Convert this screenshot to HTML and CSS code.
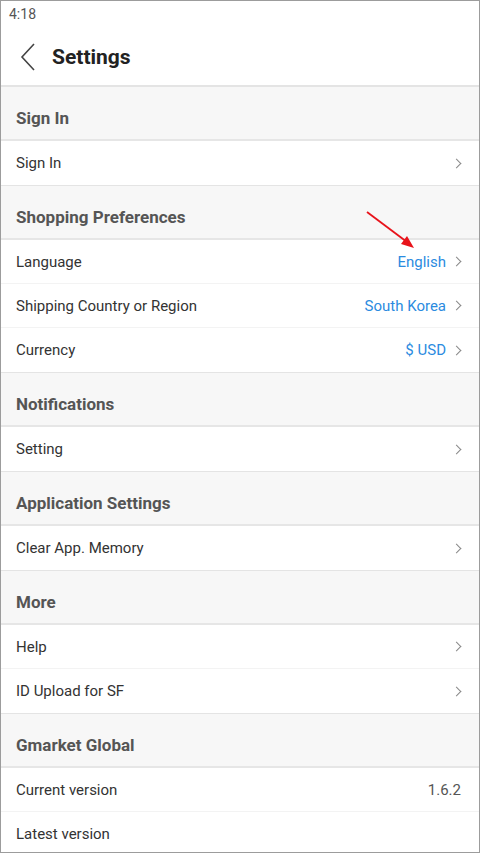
FILE: index.html
```html
<!DOCTYPE html>
<html lang="en">
<head>
    <meta charset="UTF-8">
    <meta name="viewport" content="width=device-width, initial-scale=1.0">
    <title>Settings</title>
    <link rel="stylesheet" href="styles.css">
</head>
<body>
    <div class="phone">
        <div class="status-bar">4:18</div>

        <div class="app-bar">
            <svg class="back" width="18" height="28" viewBox="0 0 18 28">
                <path d="M15 1 L3 14 L15 27" fill="none" stroke="#444" stroke-width="1.6"/>
            </svg>
            <h1 class="title">Settings</h1>
        </div>

        <div class="content">
            <div class="group">
                <div class="group-title">Sign In</div>
                <div class="row">
                    <span class="label">Sign In</span>
                    <span class="chev"></span>
                </div>
            </div>

            <div class="group">
                <div class="group-title">Shopping Preferences</div>
                <div class="row">
                    <span class="label">Language</span>
                    <span class="value">English</span>
                    <span class="chev"></span>
                </div>
                <div class="row">
                    <span class="label">Shipping Country or Region</span>
                    <span class="value">South Korea</span>
                    <span class="chev"></span>
                </div>
                <div class="row">
                    <span class="label">Currency</span>
                    <span class="value">$ USD</span>
                    <span class="chev"></span>
                </div>
            </div>

            <div class="group">
                <div class="group-title">Notifications</div>
                <div class="row">
                    <span class="label">Setting</span>
                    <span class="chev"></span>
                </div>
            </div>

            <div class="group">
                <div class="group-title">Application Settings</div>
                <div class="row">
                    <span class="label">Clear App. Memory</span>
                    <span class="chev"></span>
                </div>
            </div>

            <div class="group">
                <div class="group-title">More</div>
                <div class="row">
                    <span class="label">Help</span>
                    <span class="chev"></span>
                </div>
                <div class="row">
                    <span class="label">ID Upload for SF</span>
                    <span class="chev"></span>
                </div>
            </div>

            <div class="group">
                <div class="group-title">Gmarket Global</div>
                <div class="row">
                    <span class="label">Current version</span>
                    <span class="version">1.6.2</span>
                </div>
                <div class="row">
                    <span class="label">Latest version</span>
                </div>
            </div>

            <!-- annotation arrow pointing at the language value -->
            <svg class="pointer" width="60" height="46" viewBox="0 0 60 46">
                <line x1="2" y1="2" x2="42" y2="32" stroke="#e8131b" stroke-width="1.8"/>
                <polygon points="49,38 36,34 42,26" fill="#e8131b"/>
            </svg>
        </div>
    </div>
</body>
</html>
```

FILE: styles.css
```css
* {
    box-sizing: border-box;
}

body {
    margin: 0;
    background: #fff;
    font-family: Roboto, "Noto Sans", sans-serif;
}

.phone {
    width: 480px;
    height: 853px;
    border: 1px solid #9c9c9c;
    overflow: hidden;
}

.status-bar {
    height: 27px;
    padding: 5px 0 0 8px;
    font-size: 14px;
    color: #555;
}

.app-bar {
    height: 59px;
    display: flex;
    align-items: center;
    padding-left: 18px;
    border-bottom: 2px solid #e4e4e4;
}

.back {
    margin-right: 15px;
    margin-top: 1px;
}

.title {
    margin: 0;
    font-size: 21px;
    font-weight: bold;
    color: #222;
}

.content {
    position: relative;
}

.group {
    border-bottom: 1px solid #e4e4e4;
}

.group-title {
    height: 54px;
    padding: 21px 15px 0;
    background: #f7f7f7;
    border-bottom: 2px solid #e6e6e6;
    font-size: 17px;
    font-weight: bold;
    color: #555;
}

.row {
    height: 44px;
    display: flex;
    align-items: center;
    padding: 0 16px 0 15px;
    border-bottom: 1px solid #f3f3f3;
    font-size: 15px;
    color: #333;
}

.row:last-child {
    border-bottom: none;
}

.label {
    flex: 1;
}

.value {
    color: #2b8be0;
    margin-right: 7px;
}

.version {
    color: #555;
    margin-right: 2px;
}

.chev {
    width: 7px;
    height: 7px;
    border-top: 1.5px solid #888;
    border-right: 1.5px solid #888;
    transform: rotate(45deg);
    margin-right: 3px;
}

.pointer {
    position: absolute;
    left: 364px;
    top: 123px;
}
```
